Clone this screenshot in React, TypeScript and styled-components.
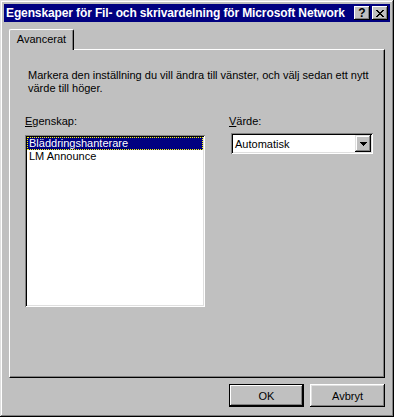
import styled, { createGlobalStyle } from 'styled-components'

const GlobalStyle = createGlobalStyle`
  html, body {
    margin: 0;
    padding: 0;
    background: #c0c0c0;
  }
  body {
    font-family: "Liberation Sans", Arial, sans-serif;
    font-size: 11px;
    color: #000;
  }
`

const Window = styled.div`
  box-sizing: border-box;
  width: 394px;
  height: 417px;
  padding: 4px;
  background: #c0c0c0;
  box-shadow: inset -1px -1px #000, inset 1px 1px #dfdfdf, inset -2px -2px #808080, inset 2px 2px #fff;
  display: flex;
  flex-direction: column;
`

const TitleBar = styled.div`
  height: 18px;
  background: #000080;
  display: flex;
  align-items: center;
  padding: 0 2px 0 2px;
`

const TitleText = styled.div`
  flex: 1;
  color: #fff;
  font-weight: bold;
  font-size: 12px;
  letter-spacing: -0.12px;
  white-space: nowrap;
  overflow: hidden;
`

const TitleButtons = styled.div`
  display: flex;
  gap: 2px;
`

const TitleButton = styled.div`
  box-sizing: border-box;
  width: 16px;
  height: 14px;
  background: #c0c0c0;
  box-shadow: inset -1px -1px #000, inset 1px 1px #fff, inset -2px -2px #808080;
  display: flex;
  align-items: center;
  justify-content: center;
  font-weight: bold;
  font-size: 12px;
  line-height: 14px;
`

const TabStrip = styled.div`
  display: flex;
  margin-top: 7px;
  padding-left: 5px;
  height: 20px;
`

const Tab = styled.div`
  position: relative;
  z-index: 1;
  box-sizing: border-box;
  height: 21px;
  width: 65px;
  background: #c0c0c0;
  border-top: 1px solid #fff;
  border-left: 1px solid #fff;
  border-right: 1px solid #000;
  border-radius: 2px 2px 0 0;
  box-shadow: inset -1px 0 #808080;
  padding-top: 3px;
  text-align: center;
`

const Panel = styled.div`
  box-sizing: border-box;
  margin-left: 5px;
  width: 376px;
  height: 329px;
  border-top: 1px solid #fff;
  border-left: 1px solid #fff;
  border-right: 1px solid #000;
  border-bottom: 1px solid #000;
  box-shadow: inset -1px -1px #808080;
  padding: 19px 0 0 15px;
`

const Intro = styled.p`
  margin: 0 0 0 3px;
  line-height: 13px;
`

const Columns = styled.div`
  display: flex;
  gap: 24px;
  margin-top: 20px;
`

const Column = styled.div<{ $width: number; $gap: number }>`
  width: ${p => p.$width}px;
  display: flex;
  flex-direction: column;
  gap: ${p => p.$gap}px;
`

const Label = styled.div`
  line-height: 13px;
  u {
    text-decoration: underline;
  }
`

const ListBox = styled.div`
  box-sizing: border-box;
  height: 172px;
  background: #fff;
  padding: 2px;
  box-shadow: inset 1px 1px #808080, inset -1px -1px #fff, inset 2px 2px #000, inset -2px -2px #dfdfdf;
`

const ListItem = styled.div<{ $selected?: boolean }>`
  box-sizing: border-box;
  height: 13px;
  line-height: 11px;
  padding-left: 1px;
  white-space: nowrap;
  background: ${p => (p.$selected ? '#000080' : 'transparent')};
  color: ${p => (p.$selected ? '#fff' : '#000')};
  border: 1px dotted ${p => (p.$selected ? '#ffff00' : 'transparent')};
`

const Combo = styled.div`
  box-sizing: border-box;
  margin-left: 2px;
  width: 142px;
  height: 21px;
  background: #fff;
  padding: 2px;
  display: flex;
  align-items: center;
  box-shadow: inset 1px 1px #808080, inset -1px -1px #fff, inset 2px 2px #000, inset -2px -2px #dfdfdf;
`

const ComboValue = styled.div`
  flex: 1;
  padding-left: 2px;
`

const ComboButton = styled.div`
  box-sizing: border-box;
  width: 16px;
  height: 17px;
  background: #c0c0c0;
  box-shadow: inset -1px -1px #000, inset 1px 1px #dfdfdf, inset -2px -2px #808080, inset 2px 2px #fff;
  display: flex;
  align-items: center;
  justify-content: center;
`

const ButtonRow = styled.div`
  display: flex;
  justify-content: flex-end;
  gap: 6px;
  margin-top: 6px;
  padding-right: 5px;
`

const Button = styled.div<{ $default?: boolean }>`
  box-sizing: border-box;
  width: 75px;
  height: 23px;
  background: #c0c0c0;
  display: flex;
  align-items: center;
  justify-content: center;
  box-shadow: ${p =>
    p.$default
      ? 'inset 0 0 0 1px #000, inset -2px -2px #000, inset 2px 2px #fff, inset -3px -3px #808080'
      : 'inset -1px -1px #000, inset 1px 1px #fff, inset -2px -2px #808080, inset 2px 2px #dfdfdf'};
`

const App = () => {
  return (
    <>
      <GlobalStyle />
      <Window>
        <TitleBar>
          <TitleText>Egenskaper för Fil- och skrivardelning för Microsoft Network</TitleText>
          <TitleButtons>
            <TitleButton>?</TitleButton>
            <TitleButton>
              <svg width="8" height="7" viewBox="0 0 8 7" shapeRendering="crispEdges">
                <path d="M0 0h2v1h-2zM6 0h2v1h-2zM1 1h2v1h-2zM5 1h2v1h-2zM2 2h4v1h-4zM3 3h2v1h-2zM2 4h4v1h-4zM1 5h2v1h-2zM5 5h2v1h-2zM0 6h2v1h-2zM6 6h2v1h-2z" fill="#000" />
              </svg>
            </TitleButton>
          </TitleButtons>
        </TitleBar>
        <TabStrip>
          <Tab>Avancerat</Tab>
        </TabStrip>
        <Panel>
          <Intro>
            Markera den inställning du vill ändra till vänster, och välj sedan ett nytt
            <br />
            värde till höger.
          </Intro>
          <Columns>
            <Column $width={180} $gap={7}>
              <Label>
                <u>E</u>genskap:
              </Label>
              <ListBox>
                <ListItem $selected>Bläddringshanterare</ListItem>
                <ListItem>LM Announce</ListItem>
              </ListBox>
            </Column>
            <Column $width={144} $gap={5}>
              <Label>
                <u>V</u>ärde:
              </Label>
              <Combo>
                <ComboValue>Automatisk</ComboValue>
                <ComboButton>
                  <svg width="7" height="4" viewBox="0 0 7 4" shapeRendering="crispEdges">
                    <path d="M0 0h7v1h-7zM1 1h5v1h-5zM2 2h3v1h-3zM3 3h1v1h-1z" fill="#000" />
                  </svg>
                </ComboButton>
              </Combo>
            </Column>
          </Columns>
        </Panel>
        <ButtonRow>
          <Button $default>OK</Button>
          <Button>Avbryt</Button>
        </ButtonRow>
      </Window>
    </>
  )
}

export default App
